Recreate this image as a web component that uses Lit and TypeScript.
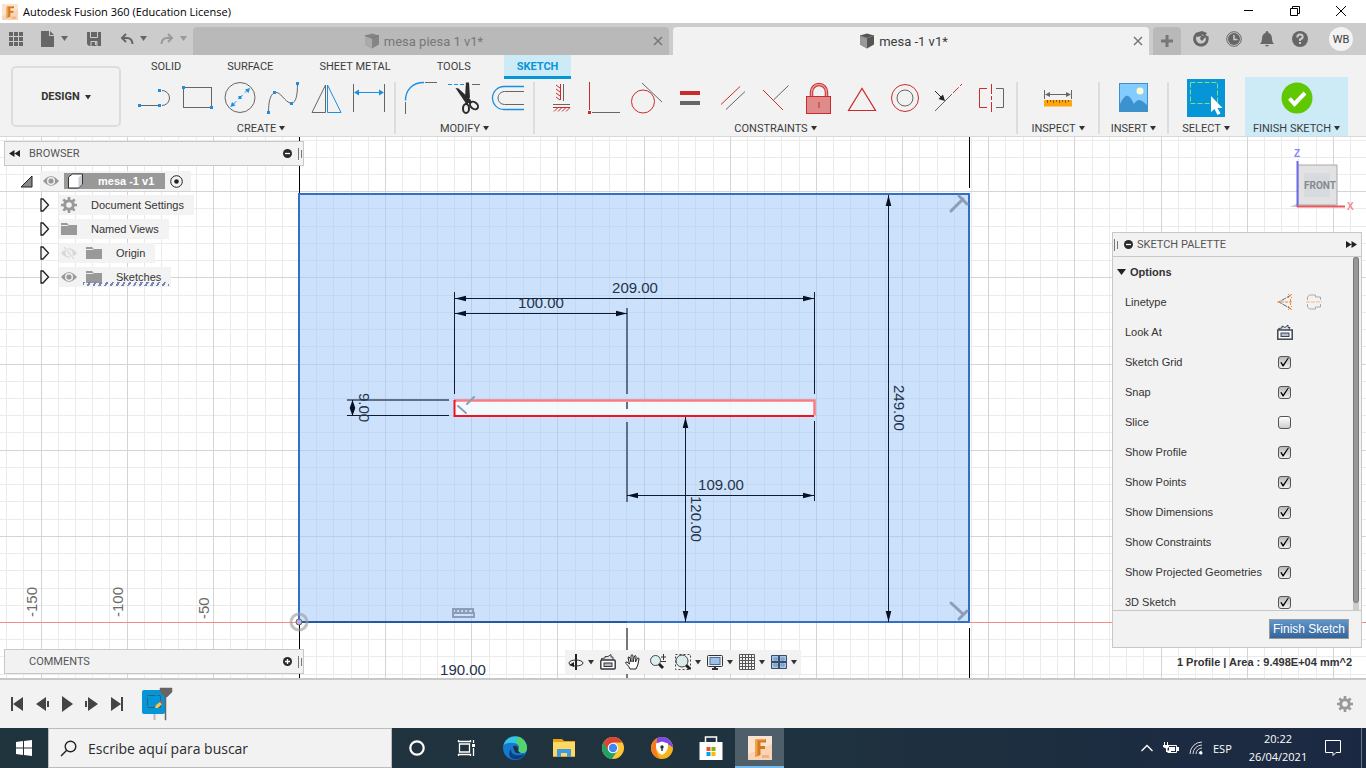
import { LitElement, html, svg, css } from "lit";
import type { TemplateResult, SVGTemplateResult } from "lit";
import { customElement, state } from "lit/decorators.js";
import { classMap } from "lit/directives/class-map.js";

const icon = (w: number, h: number, body: SVGTemplateResult): TemplateResult =>
  html`<svg width=${w} height=${h} viewBox="0 0 ${w} ${h}" fill="none" aria-hidden="true">${body}</svg>`;

const RED = "#cd2b2b";
const GRAY = "#666666";
const BLUE = "#1a8fe3";

/* Small square handle used on sketch tool icons */
const dot = (x: number, y: number, c = BLUE) =>
  svg`<rect x=${x - 1.5} y=${y - 1.5} width="3" height="3" fill=${c}/>`;

const caret = icon(6, 6, svg`<path d="M0 1h6L3 5.500z" fill="#333"/>`);
const cube = (light: string, dark: string) => icon(16, 16, svg`
  <path d="M1 2.500 8 .5l7 2v9L8 15.500l-7-4z" fill=${dark}/>
  <path d="M1 2.500 8 5v10.500l-7-4z" fill=${light}/><path d="M1 2.500 8 5l7-2.500" stroke="#777"/>`);
const fusionLogo = (s: number) => html`<svg width=${s} height=${s} viewBox="0 0 24 24" aria-hidden="true">
  <rect width="24" height="24" fill="#fbe3d2"/><path d="M0 18 24 8v16H0z" fill="#f9d3b6"/>
  <path d="M8 3h10v3.500h-5.500V10H17v3h-4.500v6L7 21V5z" fill="#d27a1e"/>
  <path d="M8 3h10l-1.500 1.500H9.500V19L7 21V5z" fill="#f2a24c"/>
  <path d="M14 19h7v3h-7z" fill="#f0b483"/></svg>`;
const gear = (s: number, c: string) => html`<svg width=${s} height=${s} viewBox="0 0 16 16" fill="none" aria-hidden="true">
  <circle cx="8" cy="8" r="4.300" stroke=${c} stroke-width="3"/>
  <path d="M8 0v3M8 13v3M0 8h3M13 8h3M2.300 2.300l2.200 2.200M11.500 11.500l2.200 2.200M2.300 13.700l2.200-2.200M11.500 4.500l2.200-2.200" stroke=${c} stroke-width="2.600"/></svg>`;
const eye = (c: string) => icon(16, 12, svg`
  <path d="M0 6Q8-3.500 16 6 8 15.500 0 6z" fill=${c}/><circle cx="8" cy="6" r="4" fill="#f2f2f2"/><circle cx="8" cy="6" r="2.600" fill=${c}/>`);
const eyeOff = icon(16, 12, svg`
  <path d="M0 6Q8-3.500 16 6 8 15.500 0 6z" fill="#d9d9d9"/><circle cx="8" cy="6" r="3.500" fill="#f2f2f2"/><circle cx="8" cy="6" r="2" fill="#d9d9d9"/><path d="M3 0l10 12" stroke="#f2f2f2" stroke-width="3"/><path d="M3 0l10 12" stroke="#d0d0d0"/>`);
const folder = icon(16, 14, svg`<path d="M0 1h6l2 2h8v10H0z" fill="#999"/><path d="M0 3.500h6.500L9 2" stroke="#eee"/>`);
const lookAt = icon(16, 16, svg`
  <path d="M2.500 6 1.500 4.500 5 4V2l3 1.500L11 1v2.500h2L11.500 6" stroke="#3d4552" fill="#dde3ea"/>
  <rect x=".8" y="6" width="14.400" height="9.200" fill="#fff" stroke="#3d4552" stroke-width="1.500"/>
  <rect x="4" y="9" width="8" height="3.500" fill="#b7c0d2" stroke="#3d4552"/>`);
const grip = icon(4, 12, svg`<path d="M.5 0v12M3.500 2v8" stroke="#777"/>`);

interface Tool { name: string; art: SVGTemplateResult }
interface Group { label: string; cls: string; tools: Tool[] }

const groups: Group[] = [
  { label: "CREATE", cls: "create", tools: [
    { name: "Line", art: svg`<path d="M3.500 25.500h20M26 25.500a7.500 7.500 0 0 0 0-15" stroke=${GRAY}/>${dot(3.5, 25.5)}${dot(23.5, 25.5)}${dot(23.5, 10.5)}` },
    { name: "Rectangle", art: svg`<rect x="4.500" y="7.500" width="28" height="20" stroke=${GRAY}/>${dot(4.5, 7.5)}${dot(32.5, 27.5)}` },
    { name: "Circle", art: svg`<circle cx="18" cy="17.500" r="15" stroke=${GRAY}/><path d="M10 25.500l16-16" stroke=${BLUE} stroke-dasharray="6 3"/><path d="M28 8l-1.500 5-3.500-3.500zM8.500 27l1.500-5 3.500 3.500z" fill=${BLUE}/>${dot(18, 17.5)}` },
    { name: "Spline", art: svg`<path d="M3.500 32.500C3.500 22 5 15 9.500 12.500 16 11 19 22 26.500 23.500 31.500 22 32.500 14 32.500 3.500" stroke=${GRAY}/>${dot(3.5, 32.5)}${dot(9.5, 12.5)}${dot(26.5, 23.5)}${dot(32.5, 3.5)}` },
    { name: "Mirror", art: svg`<path d="M4 32.500h13.500V5z" stroke=${GRAY}/><path d="M33 32.500H19.500V5z" stroke=${BLUE}/>` },
    { name: "Sketch Dimension", art: svg`<path d="M2.500 4v28M33.500 4v28" stroke=${GRAY}/><path d="M5 12.500h26" stroke=${BLUE}/><path d="M3 12.500l5-3v6zM33 12.500l-5-3v6z" fill=${BLUE}/>` },
  ] },
  { label: "MODIFY", cls: "modify", tools: [
    { name: "Fillet", art: svg`<path d="M1.500 20.500c0-10 6.500-18 18.500-18" stroke=${BLUE} stroke-width="1.300"/><path d="M21 2.500h12M1.500 22v12" stroke=${GRAY}/>` },
    { name: "Trim", art: svg`<path d="M1 4.500h16" stroke=${BLUE} stroke-dasharray="4 2"/><path d="M25 4.500h8" stroke=${GRAY}/><path d="M19 2.500h3l1 15-3 2-2-2z" fill="#2b2b2b"/><path d="M8.500 8l3 .500L24 20l-2 3-4-1z" fill="#2b2b2b"/><ellipse cx="19" cy="28.500" rx="3" ry="4.500" stroke="#2b2b2b" stroke-width="2"/><ellipse cx="27" cy="25.500" rx="4.500" ry="3.200" transform="rotate(40 27 25.500)" stroke="#2b2b2b" stroke-width="2"/><path d="M19.500 24l1-4M22 21l2 2" stroke="#2b2b2b" stroke-width="3"/>` },
    { name: "Offset", art: svg`<path d="M34 6.500H14a11.500 11.500 0 0 0 0 23h20" stroke=${BLUE} stroke-width="1.300"/><path d="M34 11.500H14.500a6.500 6.500 0 0 0 0 13H34" stroke=${GRAY}/>` },
  ] },
  { label: "CONSTRAINTS", cls: "constraints", tools: [
    { name: "Horizontal/Vertical", art: svg`<path d="M17.500 4v16M10 27.500h17M17 8l-4-3M17 12l-4-3M17 16l-4-3M17 20l-4-3M11 31.500l4-4M15 31.500l4-4M19 31.500l4-4M23 31.500l4-4" stroke=${RED}/><path d="M20.500 4v17M10 24.500h17" stroke=${GRAY}/>` },
    { name: "Coincident", art: svg`<path d="M3.500 2v28" stroke=${RED}/><path d="M6 32.500h28" stroke=${GRAY}/>${dot(3.5, 32.5, RED)}` },
    { name: "Tangent", art: svg`<circle cx="14" cy="21.500" r="11.500" stroke=${RED}/><path d="M13 3l20 19" stroke=${GRAY}/>` },
    { name: "Equal", art: svg`<path d="M8 11h20v4H8z" fill=${RED}/><path d="M8 21h20v4H8z" fill=${GRAY}/>` },
    { name: "Parallel", art: svg`<path d="M6 24.500l19-18" stroke=${RED}/><path d="M11 29.500l19-18" stroke=${GRAY}/>` },
    { name: "Perpendicular", art: svg`<path d="M5 10l20 20" stroke=${RED}/><path d="M15.500 20 30.500 5.500" stroke=${GRAY}/>` },
    { name: "Fix/Unfix", art: svg`<path d="M10.500 16v-4a7 7 0 0 1 15 0v4" stroke=${RED} stroke-width="3.500"/><path d="M10.500 16v-4a7 7 0 0 1 15 0v4" stroke="#e39a9a" stroke-width="1.500"/><rect x="5.500" y="16.500" width="24" height="17" fill="#de8b8b" stroke=${RED}/><path d="M18 22v6" stroke=${RED}/>` },
    { name: "Midpoint", art: svg`<path d="M4.500 30.500h27L18 8.500z" stroke=${RED} stroke-width="1.200"/>` },
    { name: "Concentric", art: svg`<circle cx="18" cy="18" r="13.500" stroke=${RED}/><circle cx="18" cy="18" r="8" stroke=${GRAY}/>` },
    { name: "Collinear", art: svg`<path d="M5 31l17-17" stroke=${GRAY}/><path d="M23 13l9-9" stroke=${RED} stroke-dasharray="8 2"/><path d="M5 11l8 8" stroke="#222"/><path d="M15 21l-6.500-2 4.500-4.500z" fill="#222"/>` },
    { name: "Symmetry", art: svg`<path d="M14 8.500H6.500v19H14" stroke=${RED}/><path d="M18.500 4v28" stroke=${RED} stroke-dasharray="10 2 4 2"/><path d="M23 8.500h7.500v19H23" stroke=${GRAY}/>` },
  ] },
  { label: "INSPECT", cls: "inspect", tools: [
    { name: "Measure", art: svg`<path d="M4.500 10v9M31.500 10v9M6 14.500h24" stroke=${GRAY}/><path d="M5 14.500l5-2.500v5zM31 14.500 26 12v5z" fill=${GRAY}/><path d="M4 20h28v6.500H4z" fill="#ffa60c"/><path d="M7.500 20v3M10.500 20v2M13.500 20v3M16.500 20v2M19.500 20v3M22.500 20v2M25.500 20v3M28.500 20v2" stroke="#8a5a10"/>` },
  ] },
  { label: "INSERT", cls: "insert", tools: [
    { name: "Insert Image", art: svg`<rect x="3.500" y="3.500" width="28" height="28" fill="#84cbff" stroke="#3f8fc8"/><circle cx="24" cy="11" r="3.500" fill="#fffbd0"/><path d="M4 24c6-12 9-10 14 0 4-6 6-5 13 1v6H4z" fill="#3c92cd"/>` },
  ] },
  { label: "SELECT", cls: "select", tools: [
    { name: "Select", art: svg`<rect x="-1" y="-1" width="38" height="38" fill="#0696d7"/><path d="M2.500 2.500h27v21h-27z" stroke="#7be08b" stroke-dasharray="5 2"/><path d="M23 16v16l3.500-3 3 6 3-1.500-3-5.500h5z" fill="#fff"/>` },
  ] },
  { label: "FINISH SKETCH", cls: "finish", tools: [
    { name: "Finish Sketch", art: svg`<circle cx="18" cy="18" r="15.500" fill="#60c803"/><path d="M10.500 18.500l5 5.500L26 13" stroke="#fff" stroke-width="4"/>` },
  ] },
];

@customElement("top-bars")
class TopBars extends LitElement {
  static styles = css`
    :host { display: block; font-family: Roboto, "Liberation Sans", sans-serif; color: #3c3c3c; }
    svg { display: block; flex: none; overflow: visible; }
    button { border: 0; background: none; padding: 0; margin: 0; font: inherit; color: inherit; display: flex; align-items: center; justify-content: center; }
    .title { height: 23px; background: #fff; display: flex; align-items: center; padding: 0 2px; font-family: "Open Sans", "Noto Sans", sans-serif; color: #000; }
    .title h1 { font: inherit; font-size: 11px; margin: 0; padding-left: 5px; flex: 1; }
    .title button { width: 46px; height: 22px; }
    .files { height: 32px; background: #ccc; display: flex; align-items: center; }
    .quick { width: 193px; display: flex; align-items: center; padding-left: 9px; box-sizing: border-box; }
    .quick button:nth-child(1) { margin-right: 18px; }
    .quick button { margin-right: 6px; }
    .quick .end { margin-right: 19px; }
    .quick .near { margin-right: 13px; }
    .doc { flex: 1; height: 28px; align-self: flex-end; background: #b9b9b9; border-radius: 4px 4px 0 0; margin-right: 4px; display: flex; align-items: center; font-size: 13px; color: #777; }
    .doc.on { background: #f2f2f2; color: #3c3c3c; }
    .doc span { flex: 1; display: flex; align-items: center; justify-content: center; gap: 4px; padding-left: 7px; }
    .doc button { width: 22px; height: 22px; }
    .plus { width: 28px; height: 28px; align-self: flex-end; background: #b9b9b9; border-radius: 4px 4px 0 0; }
    .account { display: flex; align-items: center; gap: 17px; padding: 0 13px 0 12px; }
    .avatar { width: 24px; height: 24px; border-radius: 50%; background: #f2f2f2; font-size: 11px; }
    .account .avatar { margin-left: 4px; }
    .ribbon { height: 82px; background: #f2f2f2; border-bottom: 1px solid #d8d8d8; box-sizing: border-box; display: flex; font-size: 11px; }
    .design { width: 110px; height: 61px; margin: 11px 11px 0 11px; box-sizing: border-box; border: 2px solid #ddd; border-radius: 5px; font-weight: 700; gap: 5px; color: #333; flex: none; }
    .right { flex: 1; display: flex; flex-direction: column; }
    .tabs { display: flex; height: 25px; gap: 20px; padding-left: 6px; }
    .tabs button { padding: 0 13px 2px; height: 24px; white-space: nowrap; }
    .tabs .on { background: #cdeaf7; color: #0696d7; font-weight: 700; box-shadow: inset 0 -3px #0696d7; }
    .groups { display: flex; flex: 1; align-items: flex-end; }
    .group { height: 59px; margin-top: -3px; display: flex; flex-direction: column; align-items: center; box-sizing: border-box; padding-top: 3px; }
    .tools { display: flex; height: 36px; flex: none; }
    .tools button { width: 43px; height: 36px; }
    .label { height: 22px; padding-top: 2px; box-sizing: border-box; gap: 3px; white-space: nowrap; flex: none; }
    .sep { width: 2px; height: 52px; background: #ddd; margin: 0 4px; align-self: center; flex: none; }
    .inspect { width: 72px; }
    .insert { width: 59px; }
    .select { width: 66px; }
    .finish { width: 103px; background: #cdeaf7; margin-left: 6px; }
  `;

  render() {
    return html`
      <header class="title">
        ${fusionLogo(16)}
        <h1>Autodesk Fusion 360 (Education License)</h1>
        <button aria-label="Minimize">${icon(10, 10, svg`<path d="M0 3.500h9" stroke="#000"/>`)}</button>
        <button aria-label="Restore">${icon(10, 10, svg`<path d="M.5 1.500h7v7h-7zM2.500 1.500v-2h7v7h-2" stroke="#000"/>`)}</button>
        <button aria-label="Close">${icon(10, 10, svg`<path d="M0-1l10 10M10-1 0 9" stroke="#000"/>`)}</button>
      </header>
      <div class="files">
        <div class="quick">
          <button aria-label="Data panel">${icon(14, 14, svg`<path d="M0 2h14M0 7h14M0 12h14" stroke="#666" stroke-width="4" stroke-dasharray="4 1"/>`)}</button>
          <button aria-label="File">${icon(14, 16, svg`<path d="M0 0h8v5h5v11H0z" fill="#666"/><path d="M9 0l4 4H9z" fill="#666"/>`)}</button>
          <button class="end" aria-label="File menu">${icon(7, 6, svg`<path d="M0 0h7L3.500 5z" fill="#666"/>`)}</button>
          <button class="end" aria-label="Save">${icon(14, 14, svg`<path d="M0 0h14v14H2l-2-2z" fill="#666"/><path d="M3.500 0v5.500h7V0M4 14V9.500h6V14" stroke="#ccc"/><path d="M8 10h1.500v3H8z" fill="#ccc"/>`)}</button>
          <button aria-label="Undo">${icon(14, 12, svg`<path d="M6 1 2 5l4 4M2 5h5q5 0 5.500 6" stroke="#666" stroke-width="2"/>`)}</button>
          <button class="near" aria-label="Undo history">${icon(7, 6, svg`<path d="M0 0h7L3.500 5z" fill="#666"/>`)}</button>
          <button aria-label="Redo">${icon(14, 12, svg`<path d="M8 1l4 4-4 4M12 5H7Q2 5 1.500 11" stroke="#999" stroke-width="2"/>`)}</button>
          <button aria-label="Redo history">${icon(7, 6, svg`<path d="M0 0h7L3.500 5z" fill="#999"/>`)}</button>
        </div>
        <div class="doc"><span>${cube("#aaa", "#858585")}mesa piesa 1 v1*</span><button aria-label="Close tab">${icon(8, 8, svg`<path d="M0 0l8 8M8 0 0 8" stroke="#777" stroke-width="1.500"/>`)}</button></div>
        <div class="doc on"><span>${cube("#999", "#555")}mesa -1 v1*</span><button aria-label="Close tab">${icon(8, 8, svg`<path d="M0 0l8 8M8 0 0 8" stroke="#777" stroke-width="1.500"/>`)}</button></div>
        <button class="plus" aria-label="New design">${icon(12, 12, svg`<path d="M6 0v12M0 6h12" stroke="#777" stroke-width="3"/>`)}</button>
        <div class="account">
          <button aria-label="Extensions">${icon(16, 16, svg`<path d="M4.500 2.500A6.300 6.300 0 1 0 14 6" stroke="#666" stroke-width="3"/><path d="M4 1.500 9 0l5 2-1.500 2L16 6l-4 .500L9 10 7 8l1-3-4 1z" fill="#666"/><path d="M9 3.500l1.500 1.500" stroke="#ccc"/>`)}</button>
          <button aria-label="Job status">${icon(16, 16, svg`<circle cx="8" cy="8" r="7.300" stroke="#666"/><circle cx="8" cy="8" r="6" fill="#666"/><path d="M8 4v4.500h3.500" stroke="#ccc" stroke-width="1.500"/>`)}</button>
          <button aria-label="Notifications">${icon(16, 16, svg`<path d="M8 0q1.500 0 1.500 2Q13 3 13 8q0 3 2 5H1q2-2 2-5 0-5 3.500-6Q6.500 0 8 0zM6 14h4q-2 3-4 0z" fill="#666"/>`)}</button>
          <button aria-label="Help">${icon(16, 16, svg`<circle cx="8" cy="8" r="8" fill="#666"/><path d="M5.300 6.500q0-3 2.700-3t2.700 2.400Q10.700 7.500 8 8.500V10" stroke="#ccc" stroke-width="2"/><path d="M7 11h2v2H7z" fill="#ccc"/>`)}</button>
          <button class="avatar">WB</button>
        </div>
      </div>
      <div class="ribbon">
        <button class="design">DESIGN ${caret}</button>
        <div class="right">
          <nav class="tabs">
            ${["SOLID", "SURFACE", "SHEET METAL", "TOOLS", "SKETCH"].map((t) => html`<button class=${classMap({ on: t === "SKETCH" })}>${t}</button>`)}
          </nav>
          <div class="groups">
            ${groups.map((g, i) => html`
              <div class="group ${g.cls}">
                <div class="tools">${g.tools.map((t) => html`<button aria-label=${t.name}>${icon(36, 36, t.art)}</button>`)}</div>
                <button class="label">${g.label} ${caret}</button>
              </div>
              ${i < 5 ? html`<div class="sep"></div>` : ""}`)}
          </div>
        </div>
      </div>`;
  }
}

/* Drawing area. The sketch origin sits at (0, 0) of the translated group; y grows downward. */
@customElement("sketch-canvas")
class SketchCanvas extends LitElement {
  static styles = css`
    :host { display: block; height: 100%; }
    .sheet { display: block; width: 100%; height: 100%; background: #fff; font-family: "Liberation Sans", Arial, sans-serif; font-size: 15px; }
    .minor { stroke: #ebebeb; stroke-width: 1; }
    .major { stroke: #d4d4d4; stroke-width: 1; }
    .profile { fill: #a4cbfa; fill-opacity: 0.56; }
    .dim { stroke: #101c30; stroke-width: 1; }
    .soft { stroke: #5f6f88; stroke-width: 2; }
    .value { fill: #25324a; }
    .axis { fill: #6a6a6a; }
    .mark { stroke: #8d9db5; stroke-width: 3; stroke-linecap: round; }
    .thin { stroke-width: 2; }
  `;

  private grid() {
    const step = 17.23;
    const out: SVGTemplateResult[] = [];
    for (const major of [false, true]) {
      for (let i = -60; i <= 160; i++) {
        if ((i % 5 === 0) !== major) continue;
        const p = Math.round(i * step) + 0.5;
        const cls = major ? "major" : "minor";
        out.push(svg`<path class=${cls} d="M${p}-1500V2500M-1000 ${p}H2760"/>`);
      }
    }
    return out;
  }

  private arrowed(x1: number, y1: number, x2: number, y2: number) {
    const a = (Math.atan2(y2 - y1, x2 - x1) * 180) / Math.PI;
    const len = Math.hypot(x2 - x1, y2 - y1);
    const n = Math.min(11, len / 2);
    return svg`<g transform="translate(${x1} ${y1}) rotate(${a})">
      <path class="dim" d="M0 0H${len}"/>
      <path fill="#061126" d="M0 0l${n}-2.800v5.600zM${len} 0l${-n}-2.800v5.600z"/></g>`;
  }

  render() {
    return html`<svg class="sheet" fill="none" role="img" aria-label="Sketch">
      <g transform="translate(299 485)">
        ${this.grid()}
        <path d="M-1000 .5H2760" stroke="#f48a8a"/>
        <g class="axis">
          <text transform="translate(-262 -5) rotate(-90)">-150</text>
          <text transform="translate(-176 -5) rotate(-90)">-100</text>
          <text transform="translate(-90 -3) rotate(-90)">-50</text>
        </g>
        <path d="M.5-500v72M.5 0v200M670.500-500v50M670.500 6v200" stroke="#000"/>
        <path d="M670.500-450v16" stroke="#000"/>
        <path d="M328 6v200" stroke="#777" stroke-width="2"/>
        <path class="profile" fill-rule="evenodd" d="M0-428h670V0H0zM155-222v16h361v-16z"/>
        <path d="M155-222h361v16H155z" fill="#f2fafd" fill-opacity=".9"/>
        <path d="M0-428h670V0H0z" stroke="#3270c8" stroke-width="2"/>
        <path d="M0 0h328" stroke="#26579f" stroke-width="2"/>
        <circle cx="0" cy="0" r="8" stroke="#999" stroke-opacity=".6" stroke-width="3"/>
        <circle cx="0" cy="0" r="3" stroke="#666" fill="#b9b0e0"/>
        <path d="M155-221.500h360.500v15" stroke="#fb7b80" stroke-width="2.500"/>
        <path d="M155.500-222v16H515" stroke="#f31220" stroke-width="2"/>
        <path class="dim" d="M155.500-330v102M515.500-330v102M515.500-201v80M48-206.500h102"/>
        <path class="soft" d="M328-314v86M328-220v7M328-200v80M48-222h102"/>
        ${this.arrowed(156, -323.5, 515, -323.5)}
        ${this.arrowed(156, -308.5, 328, -308.5)}
        ${this.arrowed(328, -126.5, 515, -126.5)}
        ${this.arrowed(53.5, -222, 53.5, -206)}
        ${this.arrowed(386.5, -205, 386.5, 0)}
        ${this.arrowed(589.5, -427, 589.5, 0)}
        <g class="value">
          <text x="336" y="-329" text-anchor="middle">209.00</text>
          <text x="242" y="-314" text-anchor="middle">100.00</text>
          <text x="422" y="-132" text-anchor="middle">109.00</text>
          <text x="164" y="53" text-anchor="middle">190.00</text>
          <text transform="translate(60 -229) rotate(90)">9.00</text>
          <text transform="translate(392 -126) rotate(90)">120.00</text>
          <text transform="translate(595 -237) rotate(90)">249.00</text>
        </g>
        <g class="mark">
          <path d="M652-411l12-12M660-426l8 8"/>
          <path d="M652-19l12 11M660-3l8-8"/>
          <path class="thin" d="M168-218l7-7M159-216l8 7"/>
          <path class="thin" d="M154-9h21v4h-21zM154-9v-4h3v3l1-3h3v3l1-3h3v3l1-3h3v3l1-3h4v4" stroke-width="1"/>
        </g>
      </g>
    </svg>`;
  }
}

@customElement("view-panels")
class ViewPanels extends LitElement {
  @state() private options: [string, boolean][] = [
    ["Sketch Grid", true], ["Snap", true], ["Slice", false], ["Show Profile", true], ["Show Points", true],
    ["Show Dimensions", true], ["Show Constraints", true], ["Show Projected Geometries", true], ["3D Sketch", true],
  ];

  static styles = css`
    :host { display: block; font-family: "Liberation Sans", Arial, sans-serif; font-size: 11px; color: #333; }
    svg { display: block; flex: none; }
    button { border: 0; background: none; padding: 0; margin: 0; font: inherit; color: inherit; display: flex; align-items: center; justify-content: center; }
    .bar { position: absolute; left: 4px; width: 300px; height: 25px; box-sizing: border-box; background: #f2f2f2; border: 1px solid #c8c8c8; display: flex; align-items: center; padding: 0 1px 0 4px; color: #555; font-family: Roboto, sans-serif; }
    .browser { top: 4px; }
    .comments { bottom: 4px; padding-left: 24px; }
    .bar h2 { font: inherit; margin: 0; flex: 1; }
    .browser h2 { padding-left: 9px; }
    .bar button + svg { margin-left: 6px; }
    .tree { position: absolute; left: 20px; top: 32px; margin: 0; padding: 0; list-style: none; }
    .tree li { height: 24px; display: flex; align-items: center; gap: 9px; padding-left: 20px; }
    .tree .root { padding-left: 0; gap: 7px; }
    .chip { height: 20px; display: flex; align-items: center; background: #f2f2f2f0; padding: 0 10px 0 2px; gap: 9px; }
    .chip span { padding-left: 5px; }
    .chip b { padding-left: 5px; }
    .root .chip { padding: 0 8px 0 3px; gap: 5px; }
    .name { height: 16px; background: #999; color: #fff; display: flex; align-items: center; gap: 9px; padding: 0 11px 0 3px; }
    .active { position: relative; }
    .active::after { content: ""; position: absolute; left: 24px; right: 2px; bottom: 1px; height: 4px; background: repeating-linear-gradient(120deg, #7486b8 0 2px, transparent 2px 5px); }
    .view { position: absolute; right: 8px; top: 10px; }
    .palette { position: absolute; right: 4px; top: 95px; bottom: 30px; width: 250px; max-height: 416px; box-sizing: border-box; background: #f2f2f2; border: 1px solid #c8c8c8; display: flex; flex-direction: column; }
    .head { height: 23px; flex: none; display: flex; align-items: center; gap: 4px; padding: 0 4px 0 1px; border-bottom: 1px solid #c8c8c8; color: #555; font-family: Roboto, sans-serif; }
    .head h2 { font: inherit; margin: 0; flex: 1; }
    .head .fold { margin-left: 2px; }
    .body { flex: 1; min-height: 0; display: flex; }
    .list { flex: 1; overflow: hidden; }
    .row { height: 30px; display: flex; align-items: center; padding-left: 12px; }
    .row > :first-child { width: 152px; }
    .row label { margin-right: 1px; }
    .row svg + svg { margin-left: 13px; }
    .head2 { padding-left: 4px; gap: 4px; font-weight: 700; height: 30px; }
    .scroll { width: 6px; margin-right: 2px; background: #ccc; padding-bottom: 7px; display: flex; }
    .scroll i { flex: 1; border-radius: 3px; background: #999; border: 1px solid #777; }
    .foot { height: 36px; flex: none; border-top: 1px solid #c8c8c8; display: flex; justify-content: flex-end; align-items: center; padding-right: 12px; }
    .done { height: 20px; padding: 0 3px; border: 1px solid #999; background: linear-gradient(#5f95c8, #34659b); color: #fff; font-size: 12px; }
    input { appearance: none; width: 13px; height: 13px; margin: 0; border: 1px solid #555; border-radius: 3px; background: linear-gradient(#bbb, #eee); display: grid; place-items: center; }
    input:not(:checked) { background: linear-gradient(#fff, #ccc); }
    input:checked::before { content: ""; width: 10px; height: 10px; background: #000; clip-path: polygon(8% 55%, 20% 50%, 36% 74%, 84% 8%, 95% 8%, 40% 95%, 32% 95%); }
    .nav { position: absolute; left: 50%; bottom: 4px; height: 24px; transform: translateX(-50%); display: flex; align-items: center; background: #f2f2f2; padding: 0 7px 0 3px; gap: 9px; }
    .nav button { gap: 4px; }
    .nav .menu { margin-right: -3px; }
    .status { position: absolute; right: 14px; bottom: 10px; font-weight: 700; }
  `;

  private navItems: [string, SVGTemplateResult, boolean][] = [
    ["Orbit", svg`<path d="M8 0v16" stroke="#222" stroke-width="2"/><ellipse cx="8" cy="9" rx="7" ry="3" stroke="#333"/><path d="M1 11l5-3v5z" fill="#222"/>`, true],
    ["Look At", svg`<path d="M1.500 6V4.500L5 4V2.500h3L11 .5V3h2v3" fill="#dde3ea" stroke="#444"/><rect x=".8" y="6" width="14.400" height="9" rx="1" fill="#fff" stroke="#333" stroke-width="1.400"/><rect x="4" y="9" width="8" height="3.500" fill="#b0b9c8" stroke="#333"/>`, false],
    ["Pan", svg`<path d="M5 15Q4 12 1 9.500 0 7.500 2 8l2.500 2L3 3.500Q4 2 5 4l1 4V1.500Q7 0 8 1.500V8l1.500-6q1.500-1 1.500.5L10.500 8l2-4q1.500-.5 1.500 1-1 7-3 10z" fill="#fff" stroke="#222"/>`, false],
    ["Zoom", svg`<path d="M9 10l4 4" stroke="#222" stroke-width="3"/><circle cx="5.500" cy="6.500" r="5" fill="#dceef0" stroke="#444"/><path d="M13.500 0v6M11 3h5M11 7.500h5" stroke="#333"/>`, false],
    ["Fit", svg`<path d="M.5.500h15v15H.5z" stroke="#444" stroke-dasharray="2 2"/><path d="M11 11l4 4" stroke="#222" stroke-width="3"/><circle cx="7" cy="7" r="6" fill="#dceaea" stroke="#444"/>`, true],
    ["Display Settings", svg`<rect x=".5" y="1.500" width="15" height="11" rx="1" fill="#eee" stroke="#333"/><rect x="3" y="3.500" width="10" height="7" fill="#9fc0ea" stroke="#4a6c9c"/><path d="M5 15h6M8 12v3" stroke="#333" stroke-width="2"/>`, true],
    ["Grid and Snaps", svg`<path d="M.5.500h15v15H.5zM3.500 0v16M6.500 0v16M9.500 0v16M12.500 0v16M0 3.500h16M0 6.500h16M0 9.500h16M0 12.500h16" stroke="#555"/>`, true],
    ["Viewports", svg`<path d="M.5 1.500h15v13H.5z" fill="#a9c5e6" stroke="#3c4d66"/><path d="M8 1.500v13M.5 8h15" stroke="#3c4d66" stroke-width="2"/><path d="M3 4h3v2H3zM10 4h3v2h-3zM3 10h3v2H3zM10 10h3v2h-3z" stroke="#6a93c4"/>`, true],
  ];

  render() {
    const arrow = icon(10, 14, svg`<path d="M1 1h2l5.500 6L3 13H1z" stroke="#222" stroke-width="1.300" fill="#f6f6f6"/>`);
    const fold = (plus: boolean) => icon(9, 9, svg`<circle cx="4.500" cy="4.500" r="4.500" fill="#2b2b2b"/><path d=${plus ? "M2 4.500h5M4.500 2v5" : "M2 4.500h5"} stroke="#fff" stroke-width="1.300"/>`);
    return html`
      <section class="bar browser">
        <button aria-label="Collapse">${icon(11, 7, svg`<path d="M5.500 0v7L0 3.500zM11 0v7L5.500 3.500z" fill="#222"/>`)}</button>
        <h2>BROWSER</h2><button aria-label="Minimize">${fold(false)}</button>${grip}
      </section>
      <ul class="tree">
        <li class="root">
          ${icon(13, 13, svg`<path d="M12 1v11H1z" fill="#888" stroke="#222"/>`)}
          <div class="chip">${eye("#999")}
            <div class="name">${icon(17, 16, svg`<path d="M1.500 4l4-3h10v10l-4 4h-10z" fill="#fff" stroke="#333"/><path d="M11.500 4.500 15 1.500V11l-3.500 3.500z" fill="#c9ced8"/>`)}<b>mesa -1 v1</b></div>
            ${icon(13, 13, svg`<circle cx="6.500" cy="6.500" r="5.800" stroke="#222"/><circle cx="6.500" cy="6.500" r="2.300" fill="#222"/>`)}
          </div>
        </li>
        <li>${arrow}<div class="chip">${gear(16, "#999")}<span>Document Settings</span></div></li>
        <li>${arrow}<div class="chip">${folder}<span>Named Views</span></div></li>
        <li>${arrow}<div class="chip">${eyeOff}${folder}<span>Origin</span></div></li>
        <li>${arrow}<div class="chip active">${eye("#999")}${folder}<span>Sketches</span></div></li>
      </ul>
      <div class="view">${icon(68, 66, svg`
        <path d="M0 60l8-4h40l-4 4z" fill="#ccc"/>
        <rect x="8" y="18" width="39" height="40" fill="#e2e2e2" stroke="#aaa"/><rect x="14" y="26" width="26" height="24" fill="#d7dade"/>
        <text x="14" y="42" font-size="10" font-weight="700" font-family="Roboto, sans-serif" fill="#858a90">FRONT</text>
        <path d="M7.500 14v46" stroke="#6a6ae8" stroke-width="2"/><path d="M7 59.500h48" stroke="#e85a60" stroke-width="2"/>
        <text x="4" y="10" font-size="10" font-weight="700" fill="#8a8af2">Z</text><text x="57" y="63" font-size="10" font-weight="700" fill="#f58a8a">X</text>`)}</div>
      <section class="palette">
        <div class="head">${grip}<button class="fold" aria-label="Minimize">${fold(false)}</button><h2>SKETCH PALETTE</h2>
          <button aria-label="Expand">${icon(11, 7, svg`<path d="M0 0l5.500 3.500L0 7zM5.500 0 11 3.500 5.500 7z" fill="#222"/>`)}</button></div>
        <div class="body">
          <div class="list">
            <button class="head2">${icon(9, 6, svg`<path d="M0 0h9L4.500 6z" fill="#222"/>`)}Options</button>
            <div class="row"><span>Linetype</span>
              ${icon(16, 16, svg`<path d="M14 1 2 8l12 7" stroke="#666" stroke-dasharray="5 1"/><path d="M0 8h16M13.500 5v6M11 0l4 4M15 0l-4 4M11 16l4-4M15 16l-4-4" stroke="#ee8d3c" stroke-dasharray="3 1"/>`)}
              ${icon(16, 16, svg`<path d="M1.500 6V3l2-2h6v2h5v3M1.500 10v3l2 2h6v-2h5v-3" stroke="#aaa"/><path d="M0 8h16" stroke="#f2b98c" stroke-dasharray="4 1"/>`)}
            </div>
            <div class="row"><span>Look At</span>${lookAt}</div>
            ${this.options.map(([label, on], i) => html`<div class="row"><label for="opt${i}">${label}</label><input id="opt${i}" type="checkbox" .checked=${on}></div>`)}
          </div>
          <div class="scroll"><i></i></div>
        </div>
        <div class="foot"><button class="done">Finish Sketch</button></div>
      </section>
      <section class="bar comments"><h2>COMMENTS</h2><button aria-label="Expand">${fold(true)}</button>${grip}</section>
      <div class="nav">${this.navItems.map(([n, art, menu]) => html`<button class=${classMap({ menu })} aria-label=${n}>${icon(16, 16, art)}${menu ? caret : ""}</button>`)}</div>
      <div class="status">1 Profile | Area : 9.498E+04 mm^2</div>`;
  }
}

@customElement("bottom-bars")
class BottomBars extends LitElement {
  static styles = css`
    :host { display: block; }
    svg { display: block; flex: none; }
    button { border: 0; background: none; padding: 0; margin: 0; font: inherit; color: inherit; display: flex; align-items: center; justify-content: center; }
    .timeline { height: 50px; box-sizing: border-box; background: #f2f2f2; border-top: 2px solid #c8c8c8; display: flex; align-items: center; padding: 0 13px 0 10px; gap: 11px; }
    .feature { flex: 1; padding-left: 6px; }
    .task { height: 40px; display: flex; background: linear-gradient(90deg, #20343d, #1f323f 60%, #1b2842); color: #fff; font-family: "Open Sans", "Noto Sans", sans-serif; font-size: 11px; }
    .start { width: 48px; }
    .search { width: 344px; box-sizing: border-box; background: #f2f2f2; border: 1px solid #bbb; display: flex; align-items: center; padding-left: 11px; gap: 11px; }
    .search input { flex: 1; border: 0; background: none; outline: 0; padding: 0; font: inherit; font-size: 14px; }
    .search input::placeholder { color: #2b2b2b; opacity: 1; }
    .app { width: 49px; height: 40px; }
    .app.on { background: #4f5f69; box-shadow: inset 0 -2px #76b9ed; }
    .tray { margin-left: auto; display: flex; align-items: center; gap: 10px; }
    .clock { text-align: center; line-height: 18px; width: 66px; white-space: nowrap; }
    .lang { width: 20px; margin-right: 2px; }
    .note { width: 24px; }
    .peek { width: 5px; height: 40px; border-left: 1px solid #6b7686; box-sizing: border-box; margin-left: 6px; }
  `;

  private controls: [string, SVGTemplateResult][] = [
    ["Go to beginning", svg`<path d="M1 1h2v14H1zM13 1v14L3 8z" fill="#444"/>`],
    ["Step back", svg`<path d="M11 1v14L1 8zM12 5h2v6h-2z" fill="#444"/>`],
    ["Play", svg`<path d="M2 0l11 8-11 8z" fill="#444"/>`],
    ["Step forward", svg`<path d="M3 1l10 7-10 7zM0 5h2v6H0z" fill="#444"/>`],
    ["Go to end", svg`<path d="M1 1v14l10-7zM11 1h2v14h-2z" fill="#444"/>`],
  ];

  private apps: [string, TemplateResult][] = [
    ["Cortana", icon(16, 16, svg`<circle cx="8" cy="8" r="6.700" stroke="#fff" stroke-width="2.200"/>`)],
    ["Task view", icon(18, 18, svg`<path d="M2.500 5h10v8h-10zM1.500 1v1.500h12V1M1.500 17v-1.500h12V17M16.500 1v3M16.500 9v8" stroke="#fff" stroke-width="1.300"/><path d="M15 5h3v3h-3z" fill="#fff"/>`)],
    ["Edge", icon(24, 24, svg`<circle cx="12" cy="12" r="12" fill="#1479cf"/><path d="M.5 9A12 12 0 0 1 24 12q0 5-5 5-5-.5-3-4 1-5-5-6Q4 6 .5 9z" fill="#38c6df"/><path d="M15 .5A12 12 0 0 1 24 12q0 5-5 5-5-.5-3-4 1-4-3-6z" fill="#55d26b"/><path d="M8 13q0 9 14 5-6 8-14 4-4-4 0-9z" fill="#0b3f83"/><path d="M10 10q5-1 5 3 0 3 3 4-7 2-8-7z" fill="#1f3240"/>`)],
    ["Explorer", icon(22, 20, svg`<path d="M0 1h9l2 2h11v16H0z" fill="#e9a314"/><path d="M0 4h22v14H0z" fill="#ffd765"/><path d="M4 11h14v8h-4v-4H8v4H4z" fill="#3d9bdf"/>`)],
    ["Chrome", icon(22, 22, svg`<circle cx="11" cy="11" r="11" fill="#fcc934"/><path d="M11 11 1.500 5.500A11 11 0 0 0 10 22l5.500-8.500z" fill="#1ea362"/><path d="M1.500 5.500A11 11 0 0 1 20.500 5.500H11L6 13.500z" fill="#db4437"/><circle cx="11" cy="11" r="5.300" fill="#fff"/><circle cx="11" cy="11" r="4.200" fill="#4285f4"/>`)],
    ["Avast Secure Browser", icon(22, 22, svg`<circle cx="11" cy="11" r="11" fill="#f6b51c"/><path d="M6 1.300A11 11 0 0 1 22 11q-5-6-16-5z" fill="#7b49ef"/><path d="M6 1.300A11 11 0 0 0 9 21.800Q3 14 6 6z" fill="#f47b20"/><path d="M11 4.500l6 2q1 8-6 11.500Q4 14.500 5 6.500z" fill="#fff"/><circle cx="11" cy="10" r="1.700" fill="#233"/><path d="M10.300 10h1.400v4h-1.400z" fill="#233"/>`)],
    ["Store", icon(24, 24, svg`<path d="M6.500 7V1h11v6" stroke="#fff" stroke-width="1.500"/><path d="M.5 6h23v18H.5z" fill="#fff"/><path d="M7.500 11h4v4h-4z" fill="#f25022"/><path d="M12.500 11h4v4h-4z" fill="#7fba00"/><path d="M7.500 16h4v4h-4z" fill="#00a4ef"/><path d="M12.500 16h4v4h-4z" fill="#ffb900"/>`)],
    ["Fusion 360", fusionLogo(24)],
  ];

  render() {
    return html`
      <div class="timeline">
        ${this.controls.map(([n, art]) => html`<button aria-label=${n}>${icon(14, 16, art)}</button>`)}
        <div class="feature">${icon(32, 34, svg`<rect x="1" y="3" width="23" height="24" rx="2" fill="#0696d7"/><path d="M13.500 27v6" stroke="#bbb" stroke-width="2"/><rect x="6.500" y="8.500" width="13" height="12" stroke="#35607a" stroke-dasharray="8 2"/><path d="M14 21l1-3 4-3 2 2-4 4z" fill="#f8c544"/><path d="M19 15l1-1 2 2-1 1z" fill="#e03b3b"/><path d="M19 1h12v4l-5 5h-1v23h-1V10l-5-5z" fill="#666" stroke="#666" stroke-width=".5"/>`)}</div>
        <button aria-label="Timeline settings">${gear(16, "#999")}</button>
      </div>
      <footer class="task">
        <button class="start" aria-label="Inicio">${icon(16, 16, svg`<path d="M0 2l7-1v6.500H0zM8 1l8-1v7.500H8zM0 8.500h7V15l-7-1zM8 8.500h8V16l-8-1z" fill="#fff"/>`)}</button>
        <label class="search">${icon(17, 17, svg`<circle cx="10.500" cy="6.500" r="5.300" stroke="#222" stroke-width="1.400"/><path d="M6.500 10.500 1 16" stroke="#222" stroke-width="1.400"/>`)}<input type="text" placeholder="Escribe aquí para buscar" aria-label="Escribe aquí para buscar"></label>
        ${this.apps.map(([n, art]) => html`<button class=${classMap({ app: true, on: n === "Fusion 360" })} aria-label=${n}>${art}</button>`)}
        <div class="tray">
          ${icon(12, 8, svg`<path d="M.5 7 6 1.500 11.500 7" stroke="#fff" stroke-width="1.300"/>`)}
          ${icon(16, 12, svg`<path d="M4.500 3.500h9v7h-9" stroke="#fff"/><path d="M6 5h6v4H6zM14 5h2v4h-2zM1 0h1v3H1zM4 0h1v3H4zM0 3h6v2L4.500 6.500v2H8V10H3V6.500L0 5z" fill="#fff"/>`)}
          ${icon(14, 14, svg`<path d="M1 13A12 12 0 0 1 13 1M4 13a9 9 0 0 1 9-9M7 13a6 6 0 0 1 6-6M10 13a3 3 0 0 1 3-3" stroke="#ddd"/><circle cx="12" cy="12" r="1.500" fill="#fff"/>`)}
          <span class="lang">ESP</span>
          <div class="clock">20:22<br>26/04/2021</div>
          <button class="note" aria-label="Notificaciones">${icon(16, 16, svg`<path d="M.5.500h15v12H11l-3 3v-3H.5z" stroke="#fff"/>`)}</button>
          <div class="peek"></div>
        </div>
      </footer>`;
  }
}

@customElement("app-root")
class AppRoot extends LitElement {
  static styles = css`
    :host { display: flex; flex-direction: column; height: 100vh; overflow: hidden; }
    .stage { flex: 1; min-height: 0; position: relative; overflow: hidden; }
  `;
  render() {
    return html`<top-bars></top-bars>
      <main class="stage"><sketch-canvas></sketch-canvas><view-panels></view-panels></main>
      <bottom-bars></bottom-bars>`;
  }
}
